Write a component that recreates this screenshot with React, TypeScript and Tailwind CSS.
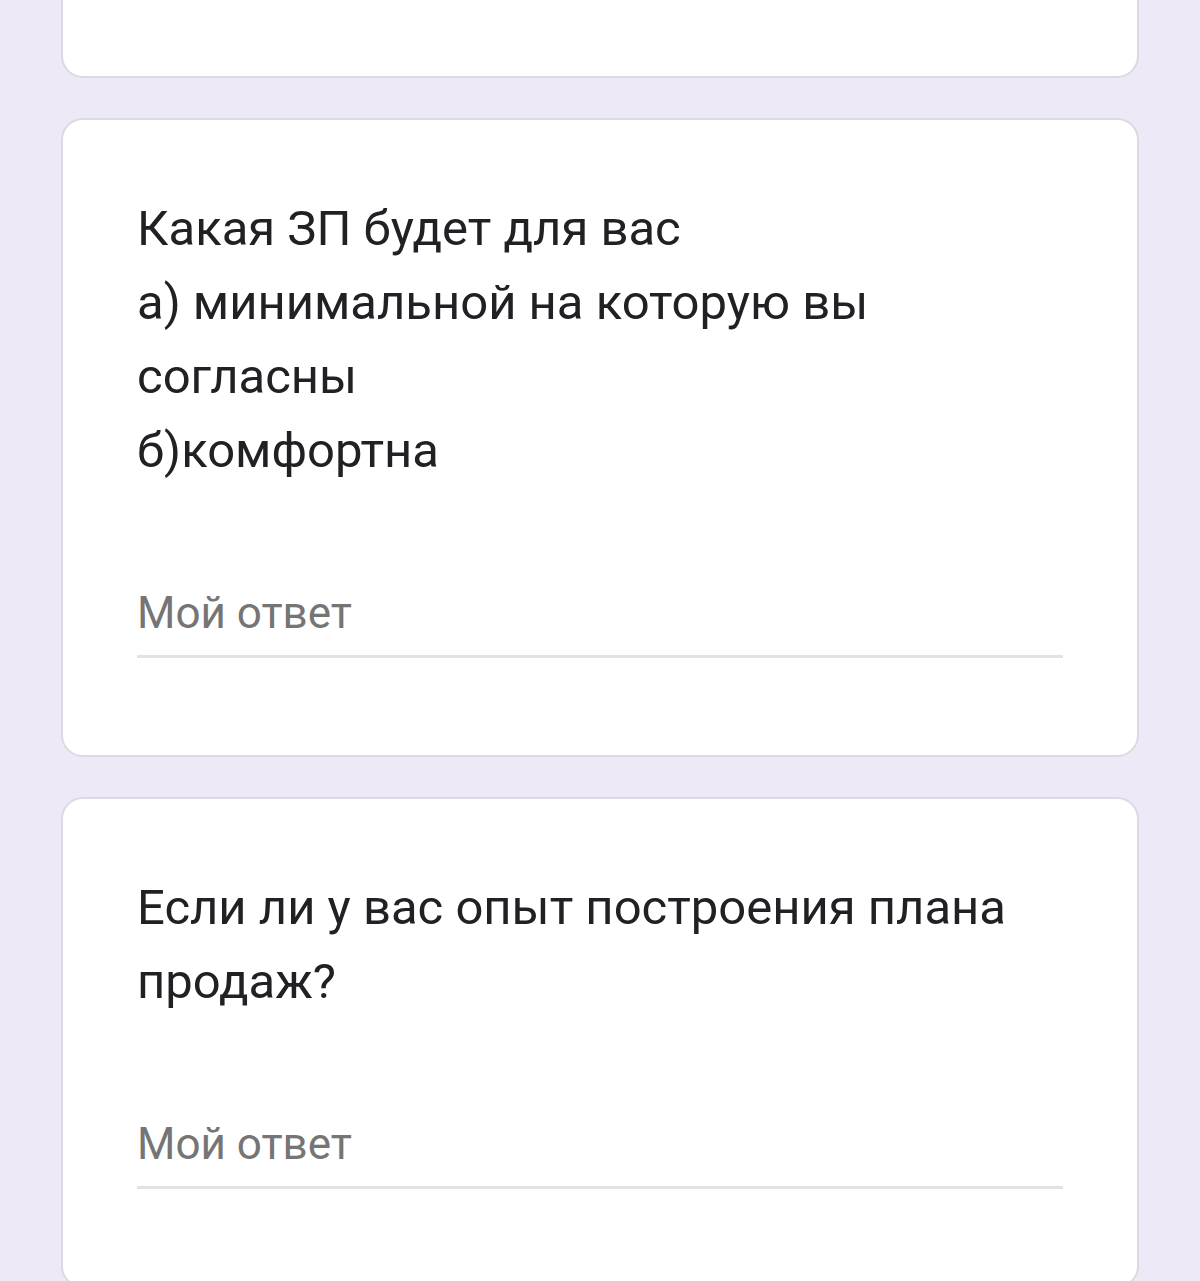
const font = { fontFamily: 'Roboto, "Noto Sans", sans-serif' };

function AnswerField() {
  return (
    <div className="mt-[97px]">
      <div className="text-[44px] leading-[56px] text-[#757575]">Мой ответ</div>
      <div className="mt-[14px] h-[3px] bg-[#e2e2e4]" />
    </div>
  );
}

function Question({ lines }: { lines: string[] }) {
  return (
    <div className="rounded-[22px] border-2 border-[#dcd9e1] bg-white px-[74px] pt-[72px] pb-[97px]">
      <div className="text-[49px] leading-[74px] text-[#202124]">
        {lines.map((l, i) => (
          <div key={i}>{l}</div>
        ))}
      </div>
      <AnswerField />
    </div>
  );
}

export default function App() {
  return (
    <div className="min-h-[1281px] bg-[#ede9f7] px-[61px]" style={font}>
      <div className="flex flex-col gap-[40px]">
        <div className="h-[78px] rounded-b-[22px] border-2 border-t-0 border-[#dcd9e1] bg-white" />
        <Question
          lines={[
            'Какая ЗП будет для вас',
            'а) минимальной на которую вы',
            'согласны',
            'б)комфортна',
          ]}
        />
        <Question lines={['Если ли у вас опыт построения плана', 'продаж?']} />
      </div>
    </div>
  );
}
